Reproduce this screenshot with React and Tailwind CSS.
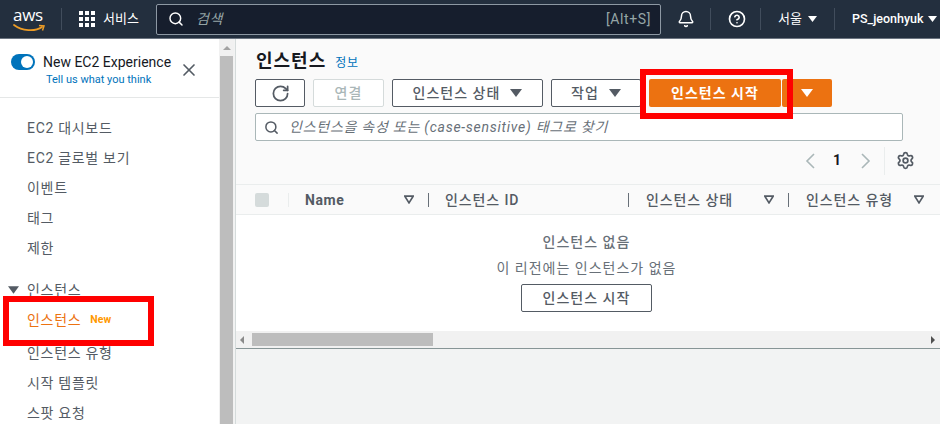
import React from 'react';
import { RotateCw, Search, X, Settings, Bell, CircleHelp } from 'lucide-react';

const font = 'font-["Roboto","Noto_Sans_CJK_KR",sans-serif]';

function Caret({ className }) {
  return (
    <svg viewBox="0 0 12 8" className={className}>
      <path d="M0 0h12L6 8z" fill="currentColor" />
    </svg>
  );
}

function SortIcon() {
  return (
    <svg viewBox="0 0 12 10" className="w-[10px] h-[9px] text-[#545b64] shrink-0">
      <path d="M1 1h10L6 9z" fill="none" stroke="currentColor" strokeWidth="2" />
    </svg>
  );
}

function AwsLogo() {
  return (
    <div className="relative w-[32px] h-[28px] mt-[1px]">
      <span className="absolute left-0 top-[-1px] text-white text-[17px] leading-[20px] font-['Open_Sans',sans-serif] tracking-[-0.3px]">aws</span>
      <svg viewBox="0 0 32 9" className="absolute left-0 top-[18px] w-[32px] h-[9px]">
        <path d="M1 1c8 6 21 7 28 2" fill="none" stroke="#ec9c26" strokeWidth="1.8" strokeLinecap="round" />
        <path d="M26 1.500l5 0.500-1.500 4.500" fill="none" stroke="#ec9c26" strokeWidth="1.500" />
      </svg>
    </div>
  );
}

function Header() {
  return (
    <header className="h-[39px] shrink-0 bg-[#232f3e] border-b border-b-[#6b7480] flex items-center text-white whitespace-nowrap">
      <div className="w-[61px] pl-[13px]"><AwsLogo /></div>
      <div className="w-px h-[22px] bg-[#414d5c] mr-[17px]" />
      <div className="grid grid-cols-3 gap-[2px] w-[16px] h-[16px] mr-[8px]">
        {[...Array(9)].map((_, i) => <span key={i} className="bg-white block w-[4px] h-[4px]" />)}
      </div>
      <span className="text-[13px] w-[53px]">서비스</span>
      <div className="w-[505px] h-[31px] bg-[#161e2d] border border-[#8d98a3] rounded-[2px] flex items-center pl-[11px] pr-[9px] mr-[16px]">
        <Search size={16} strokeWidth={2.2} className="text-white mr-[12px]" />
        <span className="italic text-[14px] text-[#95a5a6] flex-1 tracking-[0.5px]">검색</span>
        <span className="text-[14px] tracking-[0.6px] text-[#95a5a6]">[Alt+S]</span>
      </div>
      <Bell size={18} strokeWidth={2} className="mr-[15px]" />
      <div className="w-px h-[22px] bg-[#414d5c] mr-[17px]" />
      <CircleHelp size={18} strokeWidth={2.2} className="mr-[14px]" />
      <div className="w-px h-[22px] bg-[#414d5c] mr-[17px]" />
      <span className="text-[13px] w-[24px] mr-[6px]">서울</span>
      <Caret className="w-[9px] h-[6px] mr-[17px]" />
      <div className="w-px h-[22px] bg-[#414d5c] mr-[17px]" />
      <span className="text-[12.5px] w-[70px] mr-[6px] font-medium">PS_jeonhyuk</span>
      <Caret className="w-[9px] h-[6px]" />
    </header>
  );
}

function NavItem({ children, className = '' }) {
  return <div className={`pl-[27px] text-[14px] leading-[20px] tracking-[0.7px] text-[#545b64] h-[30px] flex items-center ${className}`}>{children}</div>;
}

function Sidebar() {
  return (
    <aside className="w-[219px] shrink-0 bg-white overflow-hidden relative">
      <div className="h-[59px] border-b border-[#e5e7e7] relative">
        <div className="absolute left-[11px] top-[15px] w-[24px] h-[16px] rounded-full bg-[#0073bb] flex justify-end items-center pr-[2px]">
          <span className="block w-[12px] h-[12px] rounded-full bg-white" />
        </div>
        <div className="absolute left-[43px] top-[13px] text-[14px] leading-[20px] text-[#16191f] whitespace-nowrap">New EC2 Experience</div>
        <div className="absolute left-[46px] top-[34px] text-[11px] leading-[14px] text-[#0073bb] whitespace-nowrap">Tell us what you think</div>
        <X size={20} strokeWidth={2} className="absolute left-[179px] top-[21px] text-[#545b64]" />
      </div>
      <div className="pt-[15px]">
        <NavItem>EC2 대시보드</NavItem>
        <NavItem>EC2 글로벌 보기</NavItem>
        <NavItem>이벤트</NavItem>
        <NavItem>태그</NavItem>
        <NavItem>제한</NavItem>
      </div>
      <div className="mt-[12px] h-[30px] flex items-center pl-[8px] text-[14px] tracking-[0.7px] text-[#545b64]">
        <Caret className="w-[11px] h-[8px] mr-[8px] text-[#545b64]" />
        <span>인스턴스</span>
      </div>
      <NavItem className="!text-[#ec7211]">
        인스턴스
        <span className="ml-[9px] text-[10.5px] font-bold text-[#ff9900] tracking-normal">New</span>
      </NavItem>
      <div className="h-[3px]" />
      <NavItem>인스턴스 유형</NavItem>
      <NavItem>시작 템플릿</NavItem>
      <NavItem>스팟 요청</NavItem>
    </aside>
  );
}

function Scrollbar() {
  return (
    <div className="w-[15px] shrink-0 bg-[#f1f1f1] flex flex-col items-center">
      <svg viewBox="0 0 8 4" className="w-[8px] h-[4px] mt-[7px] text-[#a3a3a3]">
        <path d="M0 4h8L4 0z" fill="currentColor" />
      </svg>
      <div className="w-[13px] flex-1 mt-[6px] bg-[#bdbdbd]" />
    </div>
  );
}

function Button({ className = '', children }) {
  return (
    <div className={`h-[28px] border border-[#545b64] rounded-[2px] bg-white text-[#545b64] text-[14px] tracking-[1px] font-medium flex items-center justify-center shrink-0 ${className}`}>
      {children}
    </div>
  );
}

function Chevron({ d }) {
  return (
    <svg viewBox="0 0 10 16" className="w-[10px] h-[16px] text-[#aab7b8] shrink-0">
      <path d={d} fill="none" stroke="currentColor" strokeWidth="1.6" />
    </svg>
  );
}

function Toolbar() {
  return (
    <div className="px-[19px] pt-[10px] relative">
      <div className="flex items-baseline h-[24px] pl-px">
        <h1 className="text-[18px] leading-[24px] font-bold tracking-[1px] text-[#16191f]">인스턴스</h1>
        <span className="ml-[9px] text-[12px] tracking-[0.6px] text-[#0073bb]">정보</span>
      </div>
      <div className="flex mt-[6px]">
        <Button className="w-[50px] mr-[8px]"><RotateCw size={19} strokeWidth={2.2} /></Button>
        <Button className="w-[71px] mr-[8px] !border-[#d5dbdb] !text-[#aab7b8]">연결</Button>
        <Button className="w-[151px] mr-[8px] gap-[10px]">인스턴스 상태 <Caret className="w-[12px] h-[8px]" /></Button>
        <Button className="w-[90px] mr-[8px] gap-[10px]">작업 <Caret className="w-[12px] h-[8px]" /></Button>
        <div className="h-[28px] w-[132px] bg-[#ec7211] rounded-[2px] text-white text-[14px] tracking-[1px] font-bold flex items-center justify-center">인스턴스 시작</div>
        <div className="h-[28px] w-[50px] ml-px bg-[#ec7211] rounded-[2px] flex items-center justify-center text-white">
          <Caret className="w-[12px] h-[8px]" />
        </div>
      </div>
      <div className="mt-[6px] w-[648px] h-[28px] bg-white border border-[#aab7b8] rounded-[2px] flex items-center pl-[8px]">
        <Search size={15} strokeWidth={2.4} className="text-[#545b64] mr-[10px]" />
        <span className="italic text-[14px] tracking-[0.75px] text-[#687078]">인스턴스을 속성 또는 (case-sensitive) 태그로 찾기</span>
      </div>
      <div className="h-[43px] flex items-center pb-[4px]">
        <div className="ml-[550px]"><Chevron d="M9 1L2 8l7 7" /></div>
        <span className="ml-[18px] w-[28px] text-[14px] font-bold text-[#16191f]">1</span>
        <Chevron d="M1 1l7 7-7 7" />
        <div className="w-px h-[28px] bg-[#eaeded] ml-[13px] mr-[11px]" />
        <Settings size={19} strokeWidth={2.2} className="text-[#545b64]" />
      </div>
    </div>
  );
}

function ColDivider({ className = '' }) {
  return <span className={`w-px h-[14px] bg-[#687078] shrink-0 ${className}`} />;
}

function InstanceTable() {
  return (
    <div>
      <div className="h-[31px] border-y border-[#eaeded] bg-[#fafafa] flex items-center text-[14px] tracking-[0.9px] text-[#545b64] font-medium whitespace-nowrap overflow-hidden">
        <span className="ml-[19px] w-[14px] h-[14px] rounded-[2px] bg-[#d5dbdb] shrink-0" />
        <span className="ml-[19px] w-px h-[14px] bg-[#eaeded] shrink-0" />
        <span className="ml-[16px] w-[99px] shrink-0 pt-[1px] font-bold tracking-[0.6px]">Name</span>
        <SortIcon />
        <ColDivider className="ml-[14px]" />
        <span className="ml-[16px] w-[183px] shrink-0 pt-[1px]">인스턴스 ID</span>
        <ColDivider />
        <span className="ml-[17px] w-[118px] shrink-0 pt-[1px]">인스턴스 상태</span>
        <SortIcon />
        <ColDivider className="ml-[14px]" />
        <span className="ml-[17px] w-[108px] shrink-0 pt-[1px]">인스턴스 유형</span>
        <SortIcon />
      </div>
      <div className="h-[116px] bg-white flex flex-col items-center pt-[17px] pr-[3px]">
        <div className="text-[14px] leading-[20px] tracking-[1px] font-medium text-[#687078]">인스턴스 없음</div>
        <div className="text-[14px] leading-[20px] tracking-[1px] text-[#687078] mt-[6px]">이 리전에는 인스턴스가 없음</div>
        <Button className="w-[131px] mt-[6px]">인스턴스 시작</Button>
      </div>
      <div className="h-[18px] bg-[#f1f1f1] border-b border-[#879596] flex items-center">
        <svg viewBox="0 0 4 8" className="w-[4px] h-[8px] ml-[4px] text-[#8a8a8a]"><path d="M4 0v8L0 4z" fill="currentColor" /></svg>
        <div className="w-[181px] h-[13px] ml-[8px] bg-[#bdbdbd]" />
        <svg viewBox="0 0 4 8" className="w-[4px] h-[8px] ml-auto mr-[5px] text-[#505050]"><path d="M0 0v8l4-4z" fill="currentColor" /></svg>
      </div>
    </div>
  );
}

export default function App() {
  return (
    <div className={`w-[940px] h-[424px] overflow-hidden relative flex flex-col bg-[#f2f3f3] ${font}`}>
      <Header />
      <div className="flex flex-1 min-h-0">
        <Sidebar />
        <Scrollbar />
        <main className="flex-1 min-w-0 border-l border-[#d5dbdb] ml-px bg-[#f2f3f3]">
          <div className="bg-[#fafafa]">
            <Toolbar />
          </div>
          <InstanceTable />
        </main>
      </div>
      <div className="absolute left-[640px] top-[69px] w-[153px] h-[50px] border-[6px] border-[#ff0000]" />
      <div className="absolute left-[3px] top-[296px] w-[151px] h-[50px] border-[6px] border-[#ff0000]" />
    </div>
  );
}
